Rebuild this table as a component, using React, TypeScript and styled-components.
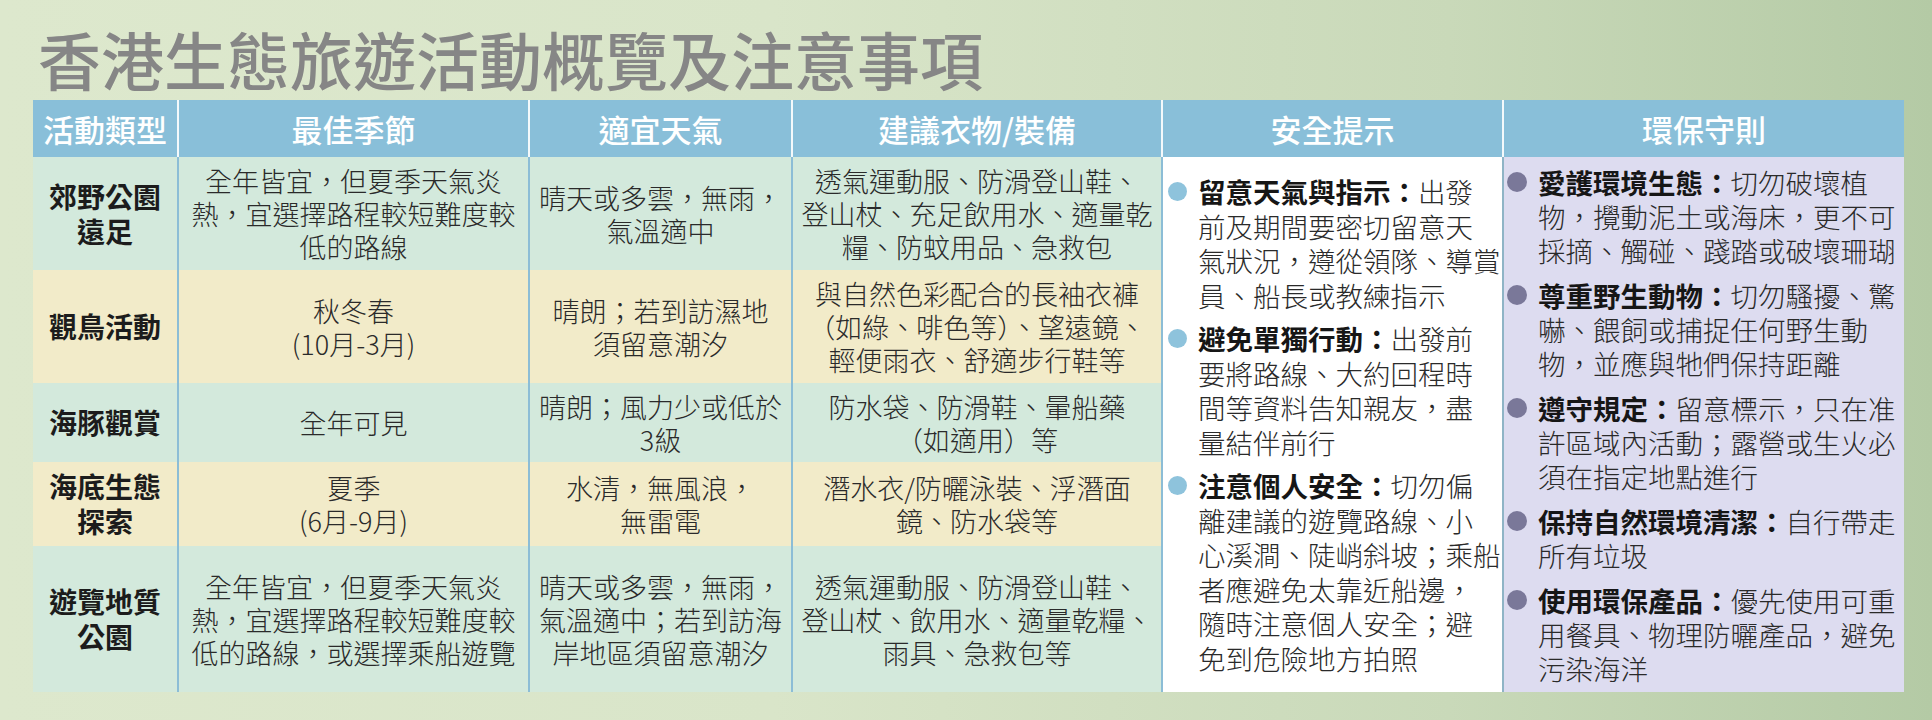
import React from "react";
import styled, { createGlobalStyle } from "styled-components";

const GlobalStyle = createGlobalStyle`
	body {
		margin: 0;
		font-family: "Noto Sans CJK TC", "Noto Sans CJK SC", "Noto Sans", sans-serif;
	}
`;

type Tone = "mint" | "cream";

const rows: { tone: Tone; name: string[]; season: string[]; weather: string[]; gear: string[] }[] = [
	{
		tone: "mint",
		name: ["郊野公園", "遠足"],
		season: ["全年皆宜，但夏季天氣炎", "熱，宜選擇路程較短難度較", "低的路線"],
		weather: ["晴天或多雲，無雨，", "氣溫適中"],
		gear: ["透氣運動服、防滑登山鞋、", "登山杖、充足飲用水、適量乾", "糧、防蚊用品、急救包"],
	},
	{
		tone: "cream",
		name: ["觀鳥活動"],
		season: ["秋冬春", "(10月-3月)"],
		weather: ["晴朗；若到訪濕地", "須留意潮汐"],
		gear: ["與自然色彩配合的長袖衣褲", "（如綠、啡色等）、望遠鏡、", "輕便雨衣、舒適步行鞋等"],
	},
	{
		tone: "mint",
		name: ["海豚觀賞"],
		season: ["全年可見"],
		weather: ["晴朗；風力少或低於", "3級"],
		gear: ["防水袋、防滑鞋、暈船藥", "（如適用）等"],
	},
	{
		tone: "cream",
		name: ["海底生態", "探索"],
		season: ["夏季", "(6月-9月)"],
		weather: ["水清，無風浪，", "無雷電"],
		gear: ["潛水衣/防曬泳裝、浮潛面", "鏡、防水袋等"],
	},
	{
		tone: "mint",
		name: ["遊覽地質", "公園"],
		season: ["全年皆宜，但夏季天氣炎", "熱，宜選擇路程較短難度較", "低的路線，或選擇乘船遊覽"],
		weather: ["晴天或多雲，無雨，", "氣溫適中；若到訪海", "岸地區須留意潮汐"],
		gear: ["透氣運動服、防滑登山鞋、", "登山杖、飲用水、適量乾糧、", "雨具、急救包等"],
	},
];

const safety = [
	{ title: "留意天氣與指示", lines: ["出發", "前及期間要密切留意天", "氣狀況，遵從領隊、導賞", "員、船長或教練指示"] },
	{ title: "避免單獨行動", lines: ["出發前", "要將路線、大約回程時", "間等資料告知親友，盡", "量結伴前行"] },
	{
		title: "注意個人安全",
		lines: ["切勿偏", "離建議的遊覽路線、小", "心溪澗、陡峭斜坡；乘船", "者應避免太靠近船邊，", "隨時注意個人安全；避", "免到危險地方拍照"],
	},
];

const eco = [
	{ title: "愛護環境生態", lines: ["切勿破壞植", "物，攪動泥土或海床，更不可", "採摘、觸碰、踐踏或破壞珊瑚"] },
	{ title: "尊重野生動物", lines: ["切勿騷擾、驚", "嚇、餵飼或捕捉任何野生動", "物，並應與牠們保持距離"] },
	{ title: "遵守規定", lines: ["留意標示，只在准", "許區域內活動；露營或生火必", "須在指定地點進行"] },
	{ title: "保持自然環境清潔", lines: ["自行帶走", "所有垃圾"] },
	{ title: "使用環保產品", lines: ["優先使用可重", "用餐具、物理防曬產品，避免", "污染海洋"] },
];

const headers = ["活動類型", "最佳季節", "適宜天氣", "建議衣物/裝備", "安全提示", "環保守則"];

// one block per printed line, so the breaks match the poster
const asLines = (lines: string[]) => lines.map((line, i) => <Line key={i}>{line}</Line>);

const App = () => {
	return (
		<Page>
			<GlobalStyle />
			<Title>香港生態旅遊活動概覽及注意事項</Title>
			<Table>
				{headers.map((h, i) => (
					<HeadCell key={h} $first={i === 0}>
						{h}
					</HeadCell>
				))}
				{rows.map((row, r) => (
					<React.Fragment key={r}>
						<NameCell $tone={row.tone} $first>
							{asLines(row.name)}
						</NameCell>
						<Cell $tone={row.tone}>{asLines(row.season)}</Cell>
						<Cell $tone={row.tone}>{asLines(row.weather)}</Cell>
						<Cell $tone={row.tone}>{asLines(row.gear)}</Cell>
					</React.Fragment>
				))}
				<SafetyColumn>
					{safety.map((item) => (
						<TipItem key={item.title}>
							<Bullet $color="#8ec3dc" $size={19} $lh={34.5} />
							<TipText $lh={34.5}>
								<Line>
									<strong>{item.title}：</strong>
									{item.lines[0]}
								</Line>
								{asLines(item.lines.slice(1))}
							</TipText>
						</TipItem>
					))}
				</SafetyColumn>
				<EcoColumn>
					{eco.map((item) => (
						<TipItem key={item.title}>
							<Bullet $color="#7a7899" $size={20} $lh={34} />
							<TipText $lh={34}>
								<Line>
									<strong>{item.title}：</strong>
									{item.lines[0]}
								</Line>
								{asLines(item.lines.slice(1))}
							</TipText>
						</TipItem>
					))}
				</EcoColumn>
			</Table>
		</Page>
	);
};

export default App;

const Page = styled.div`
	width: 1932px;
	height: 720px;
	box-sizing: border-box;
	padding: 26px 0 0 33px;
	background: linear-gradient(90deg, #dde8cd 0%, #d9e5c9 40%, #c9d9b9 75%, #b4caa5 100%);
	overflow: hidden;
`;

const Title = styled.h1`
	margin: 0 0 11px 5px;
	font-size: 63px;
	line-height: 63px;
	font-weight: 500;
	color: #868686;
	white-space: nowrap;
`;

const Table = styled.div`
	display: grid;
	grid-template-columns: 144px 351px 263px 370px 341px 402px;
	grid-template-rows: 57px 113px 113px 79px 84px 146px;
	width: 1871px;
`;

const HeadCell = styled.div<{ $first?: boolean }>`
	display: flex;
	align-items: center;
	justify-content: center;
	background: #89bfd9;
	color: #fff;
	font-size: 31px;
	font-weight: 500;
	border-left: ${(p) => (p.$first ? "none" : "2px solid #f4f9fb")};
	white-space: nowrap;
`;

const toneColor = { mint: "#d3e9dc", cream: "#f2ebc9" };

const Cell = styled.div<{ $tone: Tone; $first?: boolean }>`
	display: flex;
	flex-direction: column;
	align-items: center;
	justify-content: center;
	text-align: center;
	background: ${(p) => toneColor[p.$tone]};
	border-left: ${(p) => (p.$first ? "none" : "2px solid #8cbdd6")};
	color: #2a2a2a;
	font-size: 27px;
	line-height: 33px;
	font-weight: 300;
	white-space: nowrap;
`;

const NameCell = styled(Cell)`
	color: #1c1c1c;
	font-size: 28px;
	line-height: 35px;
	font-weight: 700;
`;

const Line = styled.div`
	white-space: nowrap;
`;

const SafetyColumn = styled.div`
	grid-column: 5;
	grid-row: 2 / 7;
	display: flex;
	flex-direction: column;
	justify-content: center;
	gap: 9px;
	background: #fff;
	border-left: 2px solid #8cbdd6;
	padding-left: 5px;
`;

const EcoColumn = styled.div`
	grid-column: 6;
	grid-row: 2 / 7;
	display: flex;
	flex-direction: column;
	justify-content: center;
	gap: 11px;
	background: #dddcf0;
	border-left: 2px solid #8fb4c6;
	padding-left: 3px;
`;

const TipItem = styled.div`
	display: flex;
	align-items: flex-start;
	gap: 11px;
`;

const Bullet = styled.span<{ $color: string; $size: number; $lh: number }>`
	flex: none;
	width: ${(p) => p.$size}px;
	height: ${(p) => p.$size}px;
	margin-top: ${(p) => (p.$lh - p.$size) / 2}px;
	border-radius: 50%;
	background: ${(p) => p.$color};
`;

const TipText = styled.div<{ $lh: number }>`
	font-size: 27.5px;
	line-height: ${(p) => p.$lh}px;
	font-weight: 300;
	color: #2a2a2a;
	strong {
		color: #161616;
		font-weight: 700;
	}
`;
